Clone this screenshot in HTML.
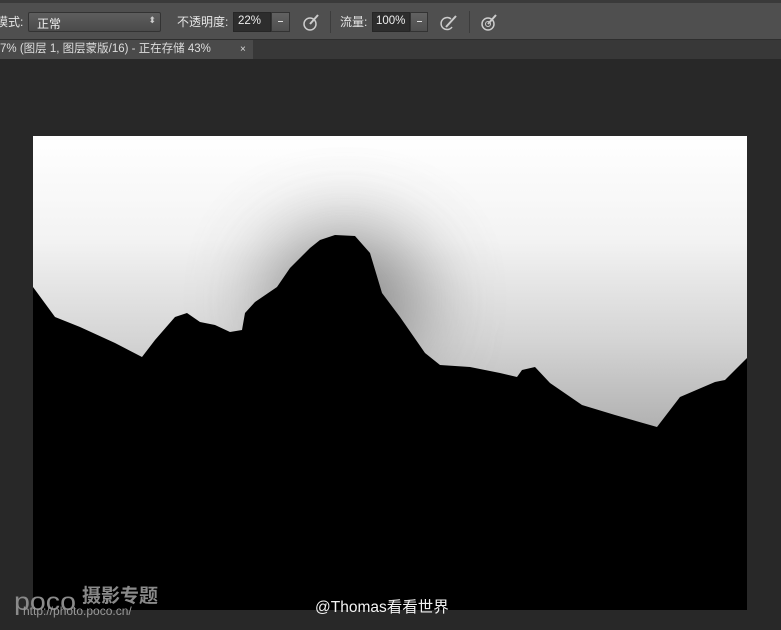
<!DOCTYPE html>
<html><head><meta charset="utf-8"><style>
body{margin:0;width:781px;height:630px;overflow:hidden;background:#282828;font-family:"Liberation Sans","Noto Sans CJK SC",sans-serif;position:relative}
.tb{position:absolute;left:0;top:0;width:781px;height:40px;background:#4f4f4f;border-top:3px solid #3a3a3a;box-sizing:border-box;border-bottom:1px solid #2e2e2e}
.t{position:absolute;color:#e6e6e6;font-size:12px;top:10px}
.box{position:absolute;top:9px;height:20px;box-sizing:border-box}
.tabbar{position:absolute;left:0;top:40px;width:781px;height:19px;background:#383838}
.tab{position:absolute;left:0;top:0;width:253px;height:19px;background:#4a4a4a;color:#ddd;font-size:11.5px;line-height:19px}
</style></head><body>
<div class="tb">
<div class="t" style="left:-4px;">模式:</div>
<div class="box" style="left:28px;width:133px;background:linear-gradient(#5e5e5e,#4a4a4a);border:1px solid #333;border-radius:2px"><span style="position:absolute;left:8px;top:2px;color:#eee;font-size:12px">正常</span><span style="position:absolute;right:4px;top:2px;color:#ccc;font-size:9px">⬍</span></div>
<div class="t" style="left:177px">不透明度:</div>
<div class="box" style="left:233px;width:38px;background:#2d2d2d;border:1px solid #262626"><span style="position:absolute;left:4px;top:2px;color:#eee;font-size:11.5px">22%</span></div>
<div class="box" style="left:271px;width:19px;background:linear-gradient(#626262,#4e4e4e);border:1px solid #333"><span style="position:absolute;left:6px;top:8px;width:5px;height:1px;background:#ddd"></span></div>
<svg style="position:absolute;left:302px;top:10px" width="18" height="18"><circle cx="8" cy="11" r="6" fill="none" stroke="#ccc" stroke-width="1.5"/><path d="M8 11 L16 2" stroke="#ccc" stroke-width="2"/></svg>
<div style="position:absolute;left:330px;top:8px;width:1px;height:22px;background:#3c3c3c"></div>
<div class="t" style="left:340px">流量:</div>
<div class="box" style="left:372px;width:38px;background:#2d2d2d;border:1px solid #262626"><span style="position:absolute;left:3px;top:2px;color:#eee;font-size:11.5px">100%</span></div>
<div class="box" style="left:410px;width:18px;background:linear-gradient(#626262,#4e4e4e);border:1px solid #333"><span style="position:absolute;left:6px;top:8px;width:5px;height:1px;background:#ddd"></span></div>
<svg style="position:absolute;left:440px;top:10px" width="18" height="18"><path d="M11 6 A6 6 0 1 0 12 14" fill="none" stroke="#ccc" stroke-width="1.5"/><path d="M6 14 L16 3" stroke="#ccc" stroke-width="2"/></svg>
<div style="position:absolute;left:469px;top:8px;width:1px;height:22px;background:#3c3c3c"></div>
<svg style="position:absolute;left:480px;top:10px" width="18" height="18"><circle cx="8" cy="11" r="6" fill="none" stroke="#ccc" stroke-width="1.5"/><circle cx="8" cy="11" r="2.5" fill="none" stroke="#ccc"/><path d="M8 11 L16 2" stroke="#ccc" stroke-width="2"/></svg>
</div>
<div class="tabbar"><div class="tab">7% (图层 1, 图层蒙版/16) - 正在存储 43% <span style="position:absolute;left:240px;font-size:10px">×</span></div></div>
<svg style="position:absolute;left:0;top:0" width="781" height="630">
<defs>
<linearGradient id="sky" x1="0" y1="136" x2="0" y2="430" gradientUnits="userSpaceOnUse">
<stop offset="0" stop-color="#ffffff"/><stop offset="0.35" stop-color="#f3f3f3"/><stop offset="0.7" stop-color="#d4d4d4"/><stop offset="1" stop-color="#b0b0b0"/></linearGradient>
<filter id="bl" x="-1" y="-1" width="3" height="3"><feGaussianBlur stdDeviation="40"/></filter>
<clipPath id="cp"><rect x="33" y="136" width="714" height="474"/></clipPath>
</defs>
<rect x="33" y="136" width="714" height="474" fill="url(#sky)"/>
<g clip-path="url(#cp)"><ellipse cx="345" cy="300" rx="80" ry="70" fill="#777" opacity="0.85" filter="url(#bl)"/></g>
<polygon fill="#000" points="33,287 55,317 80,327 115,343 142,357 155,340 175,317 187,313 200,322 215,325 230,332 242,330 245,313 255,302 277,287 290,268 310,248 320,240 335,235 355,236 370,253 382,293 400,317 425,353 440,365 470,367 500,373 517,377 522,370 535,367 550,383 582,405 615,415 657,427 680,397 715,382 725,380 747,358 747,610 33,610"/>
<text x="14" y="610" fill="#8a8a8a" font-size="25" font-family="Liberation Sans" textLength="62" lengthAdjust="spacingAndGlyphs">poco</text>
<text x="82" y="602" fill="#8a8a8a" font-size="19" font-weight="bold" font-family="Noto Sans CJK SC,sans-serif">摄影专题</text>
<text x="23" y="615" fill="#9a9a9a" font-size="12" font-family="Liberation Sans">http://photo.poco.cn/</text>
<text x="315" y="612" fill="#f2f2f2" font-size="15.5" font-family="Liberation Sans,Noto Sans CJK SC,sans-serif">@Thomas看看世界</text>
</svg>
</body></html>
